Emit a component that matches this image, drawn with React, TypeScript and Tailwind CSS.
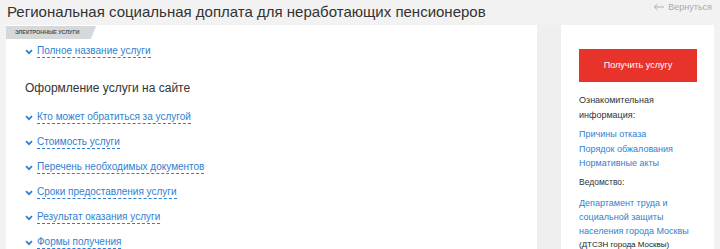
import React from "react";

const Chevron = () => (
  <svg width="8" height="6" viewBox="0 0 8 6" className="shrink-0">
    <path d="M1 1.2 L4 4.2 L7 1.2" fill="none" stroke="#2f7fd1" strokeWidth="1.7" />
  </svg>
);

const Item = ({ text }: { text: string }) => (
  <div className="flex items-center gap-[4px] h-[25px]">
    <Chevron />
    <span className="text-[10px] text-[#2f7fd1] leading-[12px] border-b border-dashed border-[#2f7fd1]">{text}</span>
  </div>
);

export default function App() {
  return (
    <div className="w-[720px] h-[249px] bg-[#f2f2f2] overflow-hidden relative" style={{ fontFamily: '"Liberation Sans", Arial, sans-serif' }}>
      <div className="flex items-start justify-between h-[25px]">
        <h1 className="pl-[7px] pt-[3px] text-[15px] leading-[18px] text-[#333]">Региональная социальная доплата для неработающих пенсионеров</h1>
        <div className="flex items-center gap-[4px] pr-[8px] pt-[1px] text-[9px] leading-[12px] text-[#aaa]">
          <svg width="11" height="8" viewBox="0 0 11 8">
            <path d="M11 4 H1.5 M4.5 1 L1.3 4 L4.5 7" fill="none" stroke="#b0b0b0" strokeWidth="1" />
          </svg>
          <span>Вернуться</span>
        </div>
      </div>
      <div className="flex">
        <div className="ml-[6px] w-[531px] h-[230px] bg-white relative">
          <div className="relative mt-[1px] h-[13px] w-[85px] bg-[#d5d9dc] flex items-center pl-[9px]">
            <span className="text-[5.5px] font-bold text-[#555] tracking-[-0.1px]">ЭЛЕКТРОННЫЕ УСЛУГИ</span>
            <div className="absolute right-[-5px] top-0 w-0 h-0 border-t-[13px] border-t-[#d5d9dc] border-r-[5px] border-r-transparent" />
          </div>
          <div className="pl-[19px]">
            <div className="mt-[0px]"><Item text="Полное название услуги" /></div>
            <div className="mt-[17px] mb-[9px] text-[12px] leading-[15px] text-[#333]">Оформление услуги на сайте</div>
            <Item text="Кто может обратиться за услугой" />
            <Item text="Стоимость услуги" />
            <Item text="Перечень необходимых документов" />
            <Item text="Сроки предоставления услуги" />
            <Item text="Результат оказания услуги" />
            <Item text="Формы получения" />
          </div>
        </div>
        <div className="w-[24px] h-[230px] bg-[#efefef]" />
        <div className="w-[153px] h-[230px] bg-white pl-[18px] pr-[17px] pt-[24px]">
          <div className="h-[33px] bg-[#e8332b] flex items-center justify-center text-white text-[9px]">Получить услугу</div>
          <div className="mt-[11px] text-[9px] leading-[14.5px] text-[#333]">Ознакомительная<br />информация:</div>
          <div className="mt-[5px] text-[9px] leading-[14.5px] text-[#2f7fd1]">
            <div>Причины отказа</div>
            <div>Порядок обжалования</div>
            <div>Нормативные акты</div>
          </div>
          <div className="mt-[5px] text-[8.5px] leading-[13px] text-[#333]">Ведомство:</div>
          <div className="mt-[7px] text-[9px] leading-[14px] text-[#2f7fd1]">Департамент труда и<br />социальной защиты<br />населения города Москвы</div>
          <div className="mt-[1px] text-[8px] leading-[11px] text-[#222]">(ДТСЗН города Москвы)</div>
        </div>
      </div>
    </div>
  );
}
